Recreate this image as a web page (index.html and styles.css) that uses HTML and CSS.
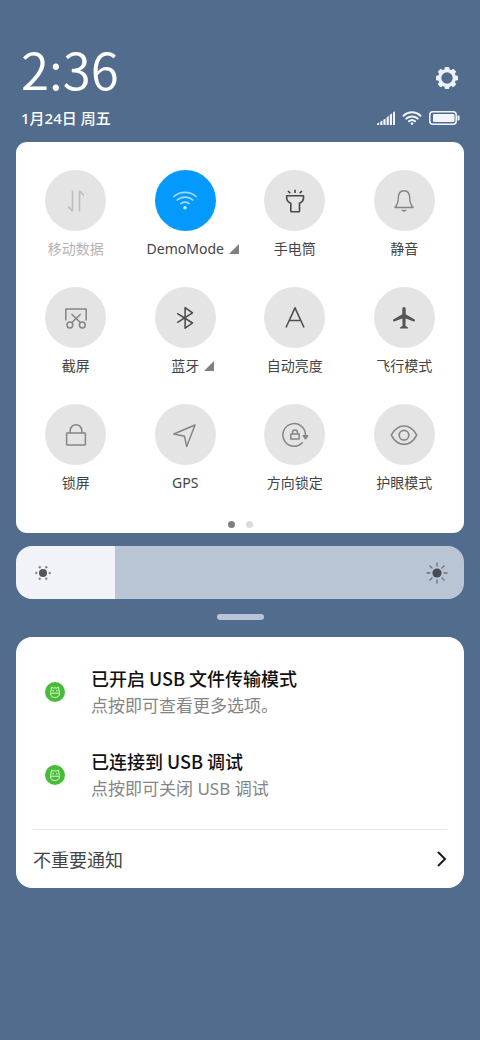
FILE: index.html
```html
<!DOCTYPE html>
<html lang="zh-CN">
<head>
<meta charset="utf-8">
<meta name="viewport" content="width=device-width, initial-scale=1">
<title>控制中心</title>
<link rel="stylesheet" href="styles.css">
</head>
<body>
<main class="shade">
  <header class="header">
    <div class="header-row">
      <time class="clock">2:36</time>
      <button class="settings" type="button" aria-label="设置">
        <svg width="24" height="24" viewBox="0 0 24 24"><g fill="#eef2f8"><g id="teeth"><rect x="9.6" y="1" width="4.8" height="4" rx="1.2"/><rect x="9.6" y="19" width="4.8" height="4" rx="1.2"/><rect x="1" y="9.6" width="4" height="4.8" rx="1.2"/><rect x="19" y="9.6" width="4" height="4.8" rx="1.2"/></g><use href="#teeth" transform="rotate(45 12 12)"/></g><circle cx="12" cy="12" r="7.4" fill="none" stroke="#eef2f8" stroke-width="3.4"/></svg>
      </button>
    </div>
    <div class="header-row">
      <span class="date">1月24日 周五</span>
      <span class="status">
        <svg width="18" height="14" viewBox="0 0 18 14" fill="#f1f4f9"><path d="M0 14v-1.500l2.200-1V14zM3.200 10.700l2.200-1.200V14H3.200zM6.400 8.700l2.200-1.300V14H6.400zM9.600 6.200l2.200-1.300V14H9.600zM12.800 3.800L15 2.500V14h-2.200zM16 1.500l2-1.300V14h-2z"/></svg>
        <svg width="20" height="14" viewBox="0 0 20 14" fill="none" stroke="#f1f4f9" stroke-width="2" stroke-linecap="round"><path d="M1.500 4.700a12.500 12.500 0 0 1 17 0M4.300 7.600a8.500 8.500 0 0 1 11.400 0M7 10.300a4.600 4.600 0 0 1 6 0"/><circle cx="10" cy="12.600" r="1.300" fill="#f1f4f9" stroke="none"/></svg>
        <svg width="31" height="14" viewBox="0 0 31 14"><rect x=".8" y=".8" width="26.400" height="12.400" rx="3" fill="none" stroke="#f1f4f9" stroke-width="1.500"/><rect x="4" y="3" width="21.500" height="8" rx="1" fill="#f1f4f9"/><path d="M28.500 4.500h1.200q.8 0 .8.800v3.400q0 .8-.8.800h-1.200z" fill="#f1f4f9"/></svg>
      </span>
    </div>
  </header>

  <section class="panel" aria-label="快捷开关">
    <div class="tiles">
      <button class="tile off" type="button" disabled>
        <span class="disc"><svg viewBox="0 0 30 30" stroke="#bdbdbd" stroke-width="1.600"><path d="M11.500 4.500v20.300L7 20.500M18.500 25.500V5.200l4.500 4.300"/></svg></span>
        <span class="label">移动数据</span>
      </button>
      <button class="tile active" type="button" aria-pressed="true">
        <span class="disc"><svg viewBox="0 0 30 30" stroke="#9fdbff" stroke-width="1.600"><path d="M3.300 11a17 17 0 0 1 23.400 0M6.700 14.500a12 12 0 0 1 16.600 0M10.200 18a7 7 0 0 1 9.600 0"/><circle cx="15" cy="21.700" r="1.800" fill="#c3e9ff" stroke="none"/></svg></span>
        <span class="label">DemoMode<svg class="more" viewBox="0 0 10 10"><path d="M10 0v10H0z"/></svg></span>
      </button>
      <button class="tile" type="button">
        <span class="disc"><svg viewBox="0 0 30 30" stroke="#484848" stroke-width="1.600"><path d="M6.700 9.700h16.800v2.800q-.3 3.200-4 4.700v7.800q0 .7-.7.700h-7.300q-.7 0-.7-.7v-7.800q-3.800-1.500-4.100-4.700zM15 3.700v3.300M8 5l2.300 2.200M22 5l-2.300 2.200"/></svg></span>
        <span class="label">手电筒</span>
      </button>
      <button class="tile" type="button">
        <span class="disc"><svg viewBox="0 0 30 30" stroke="#858585" stroke-width="1.400"><path d="M6 21.500c2.600-3 3.300-4.500 3.300-9.500 0-4.800 2-7.200 5.700-7.200s5.700 2.400 5.700 7.200c0 5 .7 6.500 3.300 9.500z"/><path d="M12.500 24.200a3.600 3.600 0 0 0 5 0z" fill="#858585" stroke-width=".6"/></svg></span>
        <span class="label">静音</span>
      </button>

      <button class="tile" type="button">
        <span class="disc"><svg viewBox="0 0 30 30" stroke="#858585" stroke-width="1.500"><path d="M4.800 17.500V6h20.400v11.500M10.500 11l9.300 9M19.700 11l-9.300 9"/><circle cx="8.900" cy="22" r="2.900"/><circle cx="21.300" cy="22" r="2.900"/></svg></span>
        <span class="label">截屏</span>
      </button>
      <button class="tile" type="button">
        <span class="disc"><svg viewBox="0 0 30 30" stroke="#484848" stroke-width="1.500"><path d="M7.200 10.300l15.300 9.700-7.400 5.200V4.600l7.400 5.200L7.200 19.600"/></svg></span>
        <span class="label">蓝牙<svg class="more" viewBox="0 0 10 10"><path d="M10 0v10H0z"/></svg></span>
      </button>
      <button class="tile" type="button">
        <span class="disc"><svg viewBox="0 0 30 30" stroke="#505050" stroke-width="1.600"><path d="M6 24.500L15 4.800 24 24.500M9.200 17.500h11.600"/></svg></span>
        <span class="label">自动亮度</span>
      </button>
      <button class="tile" type="button">
        <span class="disc"><svg viewBox="0 0 30 30"><path d="M15 4q1.700 0 1.700 2v5.200l9 5.400q.5.400.2 1.200t-1 .6l-8.200-2.900-.3 7.300 2.500 1.800q.6 1-.3 1h-7.200q-.9 0-.3-1l2.500-1.800-.3-7.300-8.200 2.900q-.7.200-1-.6t.2-1.200l9-5.400V6Q13.300 4 15 4z" fill="#555"/></svg></span>
        <span class="label">飞行模式</span>
      </button>

      <button class="tile" type="button">
        <span class="disc"><svg viewBox="0 0 30 30" stroke="#858585" stroke-width="1.500"><rect x="5.600" y="13" width="18.800" height="12" rx=".6"/><path d="M9.200 13v-2.500a5.800 5.800 0 0 1 11.600 0V13"/></svg></span>
        <span class="label">锁屏</span>
      </button>
      <button class="tile" type="button">
        <span class="disc"><svg viewBox="0 0 30 30" stroke="#858585" stroke-width="1.500"><path d="M25 5L3.800 14l10.700 2.300L16.700 26.500z"/></svg></span>
        <span class="label">GPS</span>
      </button>
      <button class="tile" type="button">
        <span class="disc"><svg viewBox="0 0 30 30" stroke="#858585" stroke-width="1.500"><path d="M22.800 22.300A11.300 11.300 0 1 1 25.500 15"/><path d="M23.300 15.700h4.400l-2.200 3z" fill="#858585"/><rect x="10.800" y="14" width="8.400" height="5"/><path d="M12.500 14v-1.500a2.500 2.500 0 0 1 5 0V14"/></svg></span>
        <span class="label">方向锁定</span>
      </button>
      <button class="tile" type="button">
        <span class="disc"><svg viewBox="0 0 30 30" stroke="#858585" stroke-width="1.600"><path d="M2.300 15.200C5.500 9 10 6 15 6s9.500 3 12.700 9.200C24.500 21.400 20 24.400 15 24.400S5.500 21.400 2.300 15.200z"/><circle cx="15" cy="15.200" r="4.800"/></svg></span>
        <span class="label">护眼模式</span>
      </button>
    </div>
    <div class="pages"><i class="dot current"></i><i class="dot"></i></div>
  </section>

  <div class="brightness">
    <input class="slider" type="range" min="0" max="100" value="22" aria-label="亮度" style="--fill: 22%">
    <svg class="sun sun-low" viewBox="0 0 22 22" fill="#555"><circle cx="11" cy="11" r="4"/><g fill="#888"><circle cx="4.300" cy="11" r="1.200"/><circle cx="17.700" cy="11" r="1.200"/><circle cx="7.700" cy="5.200" r="1.200"/><circle cx="14.300" cy="5.200" r="1.200"/><circle cx="7.700" cy="16.800" r="1.200"/><circle cx="14.300" cy="16.800" r="1.200"/></g></svg>
    <svg class="sun sun-high" viewBox="0 0 22 22" fill="#484c52"><circle cx="11" cy="11" r="4.600"/><path d="M11 1v3M11 18v3M1 11h3M18 11h3M3.900 3.900L6 6M16 16l2.100 2.100M3.900 18.100L6 16M16 6l2.100-2.100" stroke="#68717d" stroke-width="1.300" stroke-linecap="round"/></svg>
  </div>

  <div class="handle"></div>

  <section class="notices" aria-label="通知">
    <article class="notice">
      <svg class="badge" viewBox="0 0 20 20"><circle cx="10" cy="10" r="10" fill="#46bd36"/><g fill="none" stroke="#dcf7d6" stroke-width="1"><path d="M6.200 8.200L6.500 5l1.700 1.100q1.800-.6 3.600 0L13.500 5l.3 3.200"/><path d="M5.500 11.200h9q0 4.300-4.500 4.300t-4.500-4.300zM6.200 8l-.8 2.500M13.800 8l.8 2.500"/></g><circle cx="8.200" cy="8.700" r=".8" fill="#dcf7d6"/><circle cx="11.800" cy="8.700" r=".8" fill="#dcf7d6"/></svg>
      <div><h2 class="title">已开启 USB 文件传输模式</h2><p class="detail">点按即可查看更多选项。</p></div>
    </article>
    <article class="notice">
      <svg class="badge" viewBox="0 0 20 20"><circle cx="10" cy="10" r="10" fill="#46bd36"/><g fill="none" stroke="#dcf7d6" stroke-width="1"><path d="M6.200 8.200L6.500 5l1.700 1.100q1.800-.6 3.600 0L13.500 5l.3 3.200"/><path d="M5.500 11.200h9q0 4.300-4.500 4.300t-4.500-4.300zM6.200 8l-.8 2.500M13.800 8l.8 2.500"/></g><circle cx="8.200" cy="8.700" r=".8" fill="#dcf7d6"/><circle cx="11.800" cy="8.700" r=".8" fill="#dcf7d6"/></svg>
      <div><h2 class="title">已连接到 USB 调试</h2><p class="detail">点按即可关闭 USB 调试</p></div>
    </article>
    <button class="minor" type="button">
      <span>不重要通知</span>
      <svg width="10" height="16" viewBox="0 0 10 16" fill="none" stroke="#1c1c1c" stroke-width="2"><path d="M1 1l7 7-7 7"/></svg>
    </button>
  </section>
</main>
</body>
</html>
```
FILE: styles.css
```css
* { box-sizing: border-box; }

body {
  margin: 0;
  min-height: 100vh;
  background: #516c8d;
  color: #444;
  font-family: "Noto Sans", "Noto Sans CJK SC", sans-serif;
}

button {
  margin: 0;
  padding: 0;
  border: 0;
  background: none;
  color: inherit;
  font: inherit;
}

svg { display: block; flex: none; }

.shade { padding: 48px 16px 16px; }

.header {
  padding: 0 4px 0 5px;
  color: #fff;
}

.header-row {
  display: flex;
  align-items: center;
  justify-content: space-between;
}

.clock {
  height: 56px;
  font-family: "Noto Sans CJK SC", sans-serif;
  font-size: 51px;
  font-weight: 350;
  line-height: 40px;
}

.settings { margin: 4px 1px 0 0; }

.date {
  font-size: 15px;
  font-weight: 500;
  line-height: 28px;
}

.status {
  display: flex;
  gap: 7px;
}

.panel {
  margin-top: 10px;
  padding: 28px 5px 5px;
  border-radius: 11px;
  background: #fff;
}

.tiles {
  display: grid;
  grid-template-columns: repeat(4, 1fr);
  row-gap: 28px;
}

.tile {
  display: flex;
  flex-direction: column;
  align-items: center;
  gap: 8px;
}

.disc {
  display: grid;
  place-items: center;
  width: 61px;
  height: 61px;
  border-radius: 50%;
  background: #e4e4e4;
}

.disc svg {
  width: 30px;
  height: 30px;
  fill: none;
  stroke-linejoin: round;
}

.active .disc { background: #0499fd; }

.label {
  position: relative;
  font-size: 14px;
  line-height: 20px;
}

.off .label { color: #b4b4b4; }

.more {
  position: absolute;
  left: 100%;
  bottom: 5px;
  width: 10px;
  height: 10px;
  margin-left: 5px;
  fill: #808080;
}

.pages {
  display: flex;
  justify-content: center;
  gap: 11px;
  margin-top: 28px;
}

.dot {
  width: 7px;
  height: 7px;
  border-radius: 50%;
  background: #dcdcdc;
}

.dot.current { background: #808080; }

.brightness {
  position: relative;
  height: 53px;
  margin-top: 13px;
}

.slider {
  display: block;
  width: 100%;
  height: 100%;
  margin: 0;
  appearance: none;
  border-radius: 16px;
  background: linear-gradient(to right, #f1f3f8 var(--fill), #b9c5d3 var(--fill));
}

.slider::-webkit-slider-thumb {
  appearance: none;
  width: 1px;
  height: 53px;
}

.sun {
  position: absolute;
  top: 16px;
  width: 22px;
  height: 22px;
  pointer-events: none;
}

.sun-low { left: 16px; }
.sun-high { right: 16px; }

.handle {
  width: 47px;
  height: 6px;
  margin: 15px auto 17px;
  border-radius: 3px;
  background: #b9c5d6;
}

.notices {
  padding: 28px 17px 0;
  border-radius: 16px;
  background: #fff;
}

.notice {
  display: flex;
  align-items: center;
  gap: 26px;
  height: 54px;
  margin: 0 0 29px 12px;
}

.badge {
  width: 20px;
  height: 20px;
}

.title {
  margin: 0;
  color: #111;
  font-family: "Noto Sans CJK SC", sans-serif;
  font-size: 18px;
  font-weight: 500;
  line-height: 27px;
}

.detail {
  margin: 0;
  color: #858585;
  font-size: 17px;
  line-height: 27px;
}

.minor {
  display: flex;
  align-items: center;
  justify-content: space-between;
  width: 100%;
  height: 59px;
  margin-top: -2px;
  border-top: 1px solid #e6e6e6;
  font-size: 18px;
}
```
